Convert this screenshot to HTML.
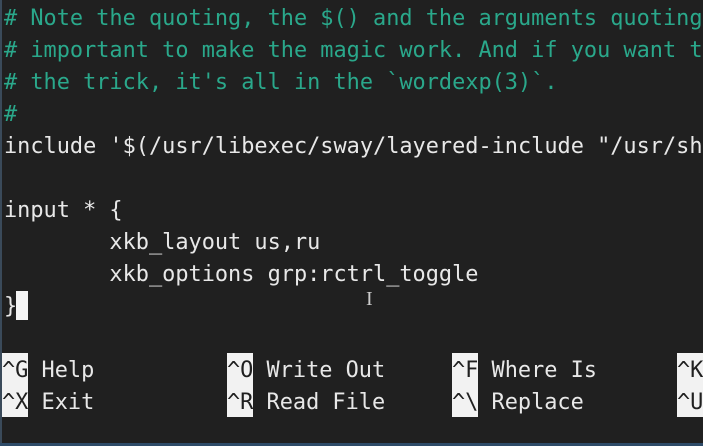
<!DOCTYPE html>
<html><head><style>
html,body{margin:0;padding:0;}
body{width:703px;height:446px;background:#202020;position:relative;overflow:hidden;font-family:"DejaVu Sans Mono","Liberation Mono",monospace;font-size:21.9px;color:#e8e8e8;}
.l{position:absolute;left:4px;height:32px;line-height:32px;white-space:pre;}
.c{color:#2aa88b;}
.k{position:absolute;height:32px;line-height:32px;white-space:pre;}
.hl{position:absolute;background:#f2f2f2;width:26px;top:353px;height:64px;}
.kk{color:#202020;}
</style></head><body>
<div style="position:absolute;left:0;top:0;width:2px;height:446px;background:#3a4a5a"></div>
<div style="position:absolute;left:0;bottom:0;width:703px;height:3px;background:#2e4b68"></div>
<div class="l c" style="top:3px"># Note the quoting, the $() and the arguments quoting</div>
<div class="l c" style="top:35px"># important to make the magic work. And if you want t</div>
<div class="l c" style="top:67px"># the trick, it's all in the `wordexp(3)`.</div>
<div class="l c" style="top:99px">#</div>
<div class="l" style="top:131px">include '$(/usr/libexec/sway/layered-include "/usr/sh</div>
<div class="l" style="top:195px">input * {</div>
<div class="l" style="top:227px">        xkb_layout us,ru</div>
<div class="l" style="top:259px">        xkb_options grp:rctrl_toggle</div>
<div class="l" style="top:291px">}</div>
<div style="position:absolute;left:16px;top:291px;width:12px;height:29px;background:#f4f4f4"></div>
<div style="position:absolute;left:366px;top:289px;font-family:'Liberation Serif',serif;font-size:20px;color:#ccc;line-height:20px">I</div>
<div class="hl" style="left:2px"></div>
<div class="hl" style="left:227px"></div>
<div class="hl" style="left:452px"></div>
<div class="hl" style="left:677px"></div>
<div class="k" style="left:2px;top:355px"><span class="kk">^G</span> Help</div>
<div class="k" style="left:2px;top:387px"><span class="kk">^X</span> Exit</div>
<div class="k" style="left:227px;top:355px"><span class="kk">^O</span> Write Out</div>
<div class="k" style="left:227px;top:387px"><span class="kk">^R</span> Read File</div>
<div class="k" style="left:452px;top:355px"><span class="kk">^F</span> Where Is</div>
<div class="k" style="left:452px;top:387px"><span class="kk">^\</span> Replace</div>
<div class="k" style="left:677px;top:355px"><span class="kk">^K</span></div>
<div class="k" style="left:677px;top:387px"><span class="kk">^U</span></div>
</body></html>
